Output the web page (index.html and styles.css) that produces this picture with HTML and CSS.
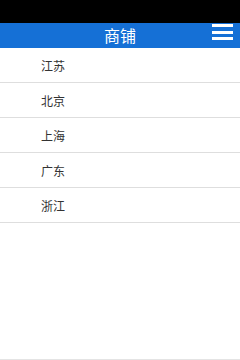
FILE: index.html
```html
<!DOCTYPE html>
<html lang="zh">
<head>
<meta charset="utf-8">
<title>商铺</title>
<link rel="stylesheet" href="styles.css">
</head>
<body>
<div class="screen">
  <div class="status"></div>
  <header class="header">
    <h1 class="title">商铺</h1>
    <button class="menu" aria-label="菜单">
      <span class="bar"></span><span class="bar"></span><span class="bar"></span>
    </button>
  </header>
  <ul class="list">
    <li class="item">江苏</li>
    <li class="item">北京</li>
    <li class="item">上海</li>
    <li class="item">广东</li>
    <li class="item">浙江</li>
  </ul>
  <div class="bottom"></div>
</div>
</body>
</html>
```
FILE: styles.css
```css
html, body {
  margin: 0;
  padding: 0;
  background: #fff;
}
body {
  font-family: "Noto Sans CJK SC", "Noto Sans", sans-serif;
}
.screen {
  width: 240px;
  height: 360px;
  display: flex;
  flex-direction: column;
}
.status {
  height: 23px;
  background: #000;
  flex: none;
}
.header {
  height: 25px;
  box-sizing: border-box;
  padding-bottom: 2px;
  background: #1570d6;
  flex: none;
  display: flex;
  align-items: center;
  justify-content: center;
  position: relative;
}
.title {
  margin: 0;
  font-size: 16px;
  font-weight: normal;
  color: #fff;
  line-height: 20px;
}
.menu {
  position: absolute;
  right: 7px;
  top: 1px;
  width: 21px;
  height: 16px;
  padding: 0;
  border: 0;
  background: transparent;
  display: flex;
  flex-direction: column;
  justify-content: space-between;
}
.bar {
  display: block;
  height: 3px;
  background: #fff;
}
.list {
  list-style: none;
  margin: 0;
  padding: 0;
  flex: 1;
}
.item {
  height: 34px;
  line-height: 36px;
  padding-left: 41px;
  font-size: 12px;
  color: #333;
  border-bottom: 1px solid #dedede;
}
.bottom {
  height: 1px;
  background: #e4e4e4;
  flex: none;
}
```
